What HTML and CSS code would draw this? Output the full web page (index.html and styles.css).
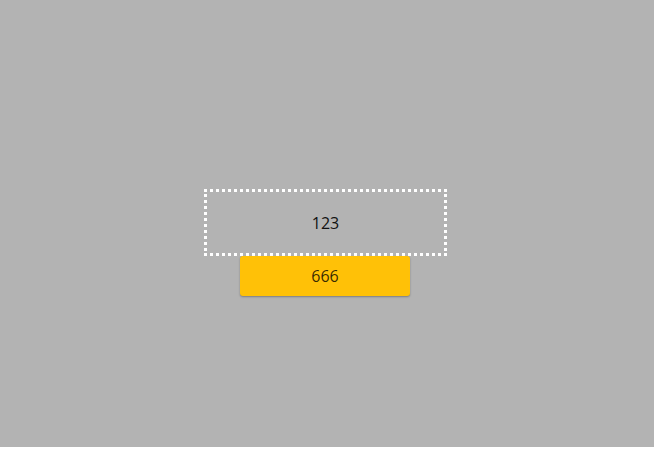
FILE: index.html
```html
<!DOCTYPE html>
<html>
<head>
<meta charset="utf-8">
<link rel="stylesheet" href="styles.css">
</head>
<body>
<div class="stage">
  <div class="group">
    <div class="dropzone">123</div>
    <button class="btn">666</button>
  </div>
</div>
</body>
</html>
```
FILE: styles.css
```css
html, body {
  margin: 0;
  padding: 0;
  background: #ffffff;
}
.stage {
  height: 447px;
  background: #b3b3b3;
  display: flex;
  justify-content: center;
  align-items: flex-start;
  padding-top: 189px;
  box-sizing: border-box;
  font-family: "Open Sans", "Noto Sans", sans-serif;
}
.group {
  display: flex;
  flex-direction: column;
  align-items: flex-start;
  margin-left: -3px;
}
.dropzone {
  width: 243px;
  height: 67px;
  box-sizing: border-box;
  border: 3px dotted #ffffff;
  display: flex;
  align-items: center;
  justify-content: center;
  font-size: 16px;
  color: #111111;
}
.btn {
  width: 170px;
  height: 40px;
  margin-left: 36px;
  border: none;
  border-radius: 3px;
  background: #ffc107;
  box-shadow: 0 1px 2px rgba(0, 0, 0, 0.3);
  font-family: "Open Sans", "Noto Sans", sans-serif;
  font-size: 16px;
  color: rgba(0, 0, 0, 0.8);
  padding: 0;
}
```
